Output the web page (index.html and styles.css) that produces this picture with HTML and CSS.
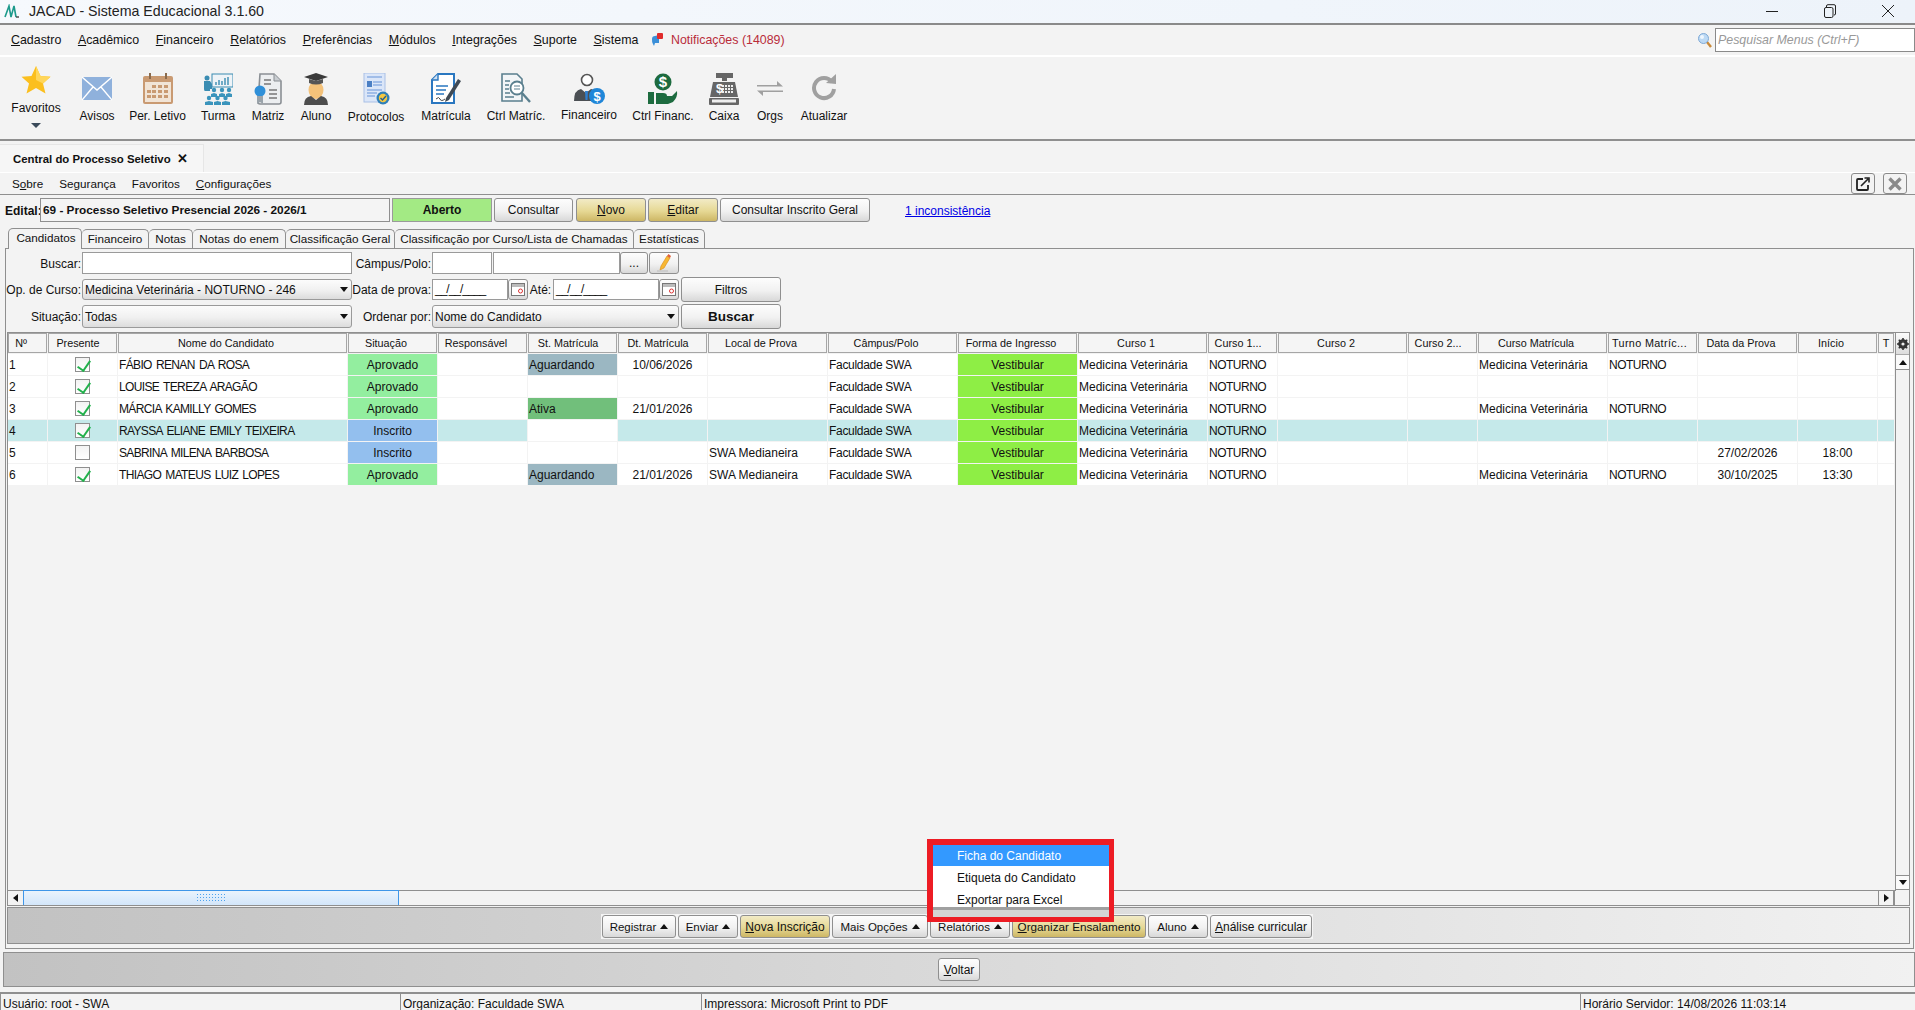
FILE: index.html
```html
<!DOCTYPE html>
<html lang="pt-BR">
<head>
	<meta charset="UTF-8">
	<title>JACAD - Sistema Educacional 3.1.60</title>
	<link rel="stylesheet" href="styles.css">
</head>
<body>
	<!-- barra de titulo -->
	<div class="titlebar">
		<svg class="logo" width="16" height="14" viewBox="0 0 16 14"><path d="M1 13 L5 2 L7 13 M7 13 L10 2 L12 13" fill="none" stroke="#1c9a8c" stroke-width="1.6"/><path d="M12 13 L15 13" stroke="#444" stroke-width="1.4"/></svg>
		<span class="app-name">JACAD - Sistema Educacional 3.1.60</span>
		<div class="win-ctrl">
			<svg width="14" height="14" viewBox="0 0 14 14"><path d="M1 7.5 H13" stroke="#222" stroke-width="1"/></svg>
			<svg width="14" height="14" viewBox="0 0 14 14"><rect x="1.5" y="3.5" width="8.5" height="10" rx="1.5" fill="none" stroke="#222"/><path d="M3.5 3 V2 Q3.5 .7 5 .7 H11 Q12.5 .7 12.5 2 V10 Q12.5 11 11 11" fill="none" stroke="#222"/></svg>
			<svg width="14" height="14" viewBox="0 0 14 14"><path d="M1 1 L13 13 M13 1 L1 13" stroke="#222" stroke-width="1"/></svg>
		</div>
	</div>

	<!-- menu principal -->
	<div class="menubar">
		<span><u>C</u>adastro</span>
		<span><u>A</u>cadêmico</span>
		<span><u>F</u>inanceiro</span>
		<span><u>R</u>elatórios</span>
		<span><u>P</u>referências</span>
		<span><u>M</u>ódulos</span>
		<span><u>I</u>ntegrações</span>
		<span><u>S</u>uporte</span>
		<span><u>S</u>istema</span>
		<span class="notif">
			<svg width="12" height="14" viewBox="0 0 12 14"><path d="M1 6 Q1 3 4 3 L8 2 V10 L4 10 L3 13 L1.5 10 Q1 9 1 6Z" fill="#3b8fd8"/><rect x="6" y="0" width="6" height="6" rx="1" fill="#e02b2b"/></svg>
			Notificações (14089)
		</span>
		<div class="menu-search">
			<svg width="15" height="16" viewBox="0 0 15 16"><path d="M10 10 L14 15" stroke="#c98a3a" stroke-width="2.4"/><circle cx="6.5" cy="6.5" r="5" fill="#bcd9f4" stroke="#7fa9d6"/><circle cx="5" cy="5" r="2" fill="#eef6fd"/></svg>
			<div class="search-box">Pesquisar Menus (Ctrl+F)</div>
		</div>
	</div>

	<!-- barra de icones -->
	<div class="toolbar">
		<div class="tool t-fav">
			<svg width="30" height="28" viewBox="0 0 30 28"><polygon points="15,0 19.5,10 29.5,10.8 22,17.5 24.5,27.5 15,22 5.5,27.5 8,17.5 .5,10.8 10.5,10" fill="#fbbf1e"/><polygon points="15,0 19.5,10 29.5,10.8 22,17.5 15,14" fill="#ffd65a"/></svg>
			<span>Favoritos</span>
			<i class="fav-caret"></i>
		</div>
		<div class="tool t-50">
			<svg width="30" height="32" viewBox="0 0 30 32"><rect y="4" width="30" height="23" fill="#8fb1dc"/><path d="M0 4 L15 17 L30 4 M0 27 L11 14 M30 27 L19 14" fill="none" stroke="#fff" stroke-width="1.4"/></svg>
			<span>Avisos</span>
		</div>
		<div class="tool t-71">
			<svg width="30" height="32" viewBox="0 0 30 32"><rect y="3" width="30" height="28" rx="2" fill="#c99a72"/><rect x="2" y="9" width="26" height="20" fill="#f1e4d6"/><g fill="#c99a72"><rect x="9" y="12" width="4" height="3"/><rect x="15" y="12" width="4" height="3"/><rect x="21" y="12" width="4" height="3"/><rect x="4" y="17" width="4" height="3"/><rect x="9" y="17" width="4" height="3"/><rect x="15" y="17" width="4" height="3"/><rect x="21" y="17" width="4" height="3"/><rect x="4" y="22" width="4" height="3"/><rect x="9" y="22" width="4" height="3"/><rect x="15" y="22" width="4" height="3"/><rect x="21" y="22" width="4" height="3"/></g><path d="M7 0 V6 M23 0 V6" stroke="#8a6a4c" stroke-width="2"/></svg>
			<span>Per. Letivo</span>
		</div>
		<div class="tool t-50">
			<svg width="30" height="32" viewBox="0 0 30 32"><rect x="9" y="1" width="21" height="13" fill="#eef3f7" stroke="#3a8cb2"/><path d="M13 12 V9 M16 12 V7 M19 12 V8 M22 12 V5 M25 12 V4" stroke="#3a8cb2" stroke-width="1.4"/><circle cx="4" cy="5" r="2.5" fill="#3a8cb2"/><path d="M1 8 H7 L9 11 V16 H7 V18 H2 Q1 18 1 16Z" fill="#3a8cb2"/><g fill="#3a94bc"><circle cx="11" cy="17" r="2.2"/><circle cx="19" cy="17" r="2.2"/><circle cx="26" cy="17" r="2.2"/><circle cx="6" cy="25" r="2.2"/><circle cx="14.5" cy="25" r="2.2"/><circle cx="22.5" cy="25" r="2.2"/><path d="M8 24 H14 V21 L11 20 L8 21Z M16 24 H22 V21 L19 20 L16 21Z M23 24 H29 V21 L26 20 L23 21Z"/><path d="M2 32 H10 V29 L6 28 L2 29Z M11 32 H18 V29 L14.5 28 L11 29Z M19 32 H27 V29 L22.5 28 L19 29Z"/></g></svg>
			<span>Turma</span>
		</div>
		<div class="tool t-50">
			<svg width="28" height="32" viewBox="0 0 28 32"><path d="M6 1 H20 L27 8 V29 Q27 31 25 31 H6 Q4 31 4 29 Z" fill="#eceef0" stroke="#8a8f94" stroke-width="1.6"/><path d="M20 1 V8 H27" fill="#c9cdd1" stroke="#8a8f94"/><path d="M10 7 H17 M10 11 H17 M15 17 H23 M15 21 H23 M15 25 H23" stroke="#777" stroke-width="1.5"/><circle cx="6" cy="18" r="5.5" fill="#2f8fd8"/><path d="M3 23 V31 L6 29 L9 31 V23" fill="#9aa3aa"/></svg>
			<span>Matriz</span>
		</div>
		<div class="tool t-46">
			<svg width="26" height="32" viewBox="0 0 26 32"><ellipse cx="13" cy="17" rx="7.5" ry="9" fill="#f4c27a"/><path d="M1 4 L13 0 L25 4 L13 8Z" fill="#3a3a3a"/><path d="M6 6 V10 Q13 13 20 10 V6 L13 8Z" fill="#555"/><path d="M1 32 Q1 24 8 23 L13 27 L18 23 Q25 24 25 32Z" fill="#4d4d4d"/></svg>
			<span>Aluno</span>
		</div>
		<div class="tool t-74">
			<svg width="27" height="32" viewBox="0 0 27 32"><rect x="1" y="0" width="21" height="29" fill="#dbe6f8" stroke="#a9c0e6"/><path d="M4 4 H19 M10 9 H19 M10 12 H19 M4 17 H19 M4 20 H14 M4 23 H12" stroke="#8fb0e2" stroke-width="1.3"/><rect x="4" y="8" width="5" height="6" fill="#4a7fc4"/><circle cx="20" cy="25" r="6.5" fill="#2f7fb8"/><circle cx="20" cy="25" r="4.2" fill="#f3c742"/><path d="M17.5 25 L19.5 27 L23 23" fill="none" stroke="#1f5f94" stroke-width="1.4"/></svg>
			<span class="lab-low">Protocolos</span>
		</div>
		<div class="tool t-66">
			<svg width="30" height="32" viewBox="0 0 30 32"><path d="M7 1 H23 V30 H1 V7Z" fill="#fff" stroke="#2a77c0" stroke-width="2"/><path d="M7 1 V7 H1" fill="#cfe0f2" stroke="#2a77c0" stroke-width="1.4"/><path d="M5 13 H17 M5 17 H15 M5 21 H13" stroke="#2a77c0" stroke-width="1.6"/><path d="M5 26 Q8 23 9 26 T14 26" fill="none" stroke="#444"/><path d="M15 25 L27 6 L30 8 L18 27 L14 29Z" fill="#3f4a55"/></svg>
			<span>Matrícula</span>
		</div>
		<div class="tool t-74">
			<svg width="30" height="32" viewBox="0 0 30 32"><path d="M1 1 H16 L21 6 V28 H1Z" fill="#f2f5f7" stroke="#5a7f8e" stroke-width="1.6"/><path d="M4 8 H9 M4 12 H8 M4 16 H8 M4 20 H9 M4 24 H13" stroke="#5a7f8e" stroke-width="1.4"/><circle cx="16" cy="15" r="6.5" fill="#fff" stroke="#5a7f8e" stroke-width="1.8"/><path d="M13 13 H19 M13 16 H19" stroke="#5a7f8e"/><path d="M21 20 L29 29" stroke="#5a7f8e" stroke-width="2.4"/></svg>
			<span>Ctrl Matríc.</span>
		</div>
		<div class="tool t-72">
			<svg width="31" height="32" viewBox="0 0 31 32"><circle cx="13" cy="7" r="5.5" fill="#fff" stroke="#555" stroke-width="1.6"/><path d="M0 28 Q0 17 7 16 L12 20 L17 16 Q19 16 20 18 L20 28Z" fill="#4b4f54"/><path d="M11 18 H14 L13.5 27 H11.5Z" fill="#2f7fd0"/><circle cx="23" cy="23" r="8" fill="#1f86d8"/><text x="23" y="27.5" class="ico-txt" text-anchor="middle">$</text></svg>
			<span class="lab-high">Financeiro</span>
		</div>
		<div class="tool t-76">
			<svg width="30" height="32" viewBox="0 0 30 32"><circle cx="15" cy="9" r="8.5" fill="#1d6b3f"/><text x="15" y="14" class="ico-txt ico-big" text-anchor="middle">$</text><path d="M0 19 H6 V31 H0Z M8 20 H15 Q19 20 19 23 H24 L29 18 Q30 24 25 29 L20 31 H8Z" fill="#1d6b3f"/></svg>
			<span>Ctrl Financ.</span>
		</div>
		<div class="tool t-46">
			<svg width="30" height="32" viewBox="0 0 30 32"><rect x="7" y="0" width="17" height="5" fill="#666"/><rect x="13" y="5" width="5" height="3" fill="#666"/><path d="M4 9 H26 L29 24 H1Z" fill="#666"/><rect x="0" y="25" width="30" height="7" rx="1" fill="#666"/><rect x="3" y="26.5" width="24" height="3" fill="#eee"/><text x="7" y="20" class="ico-txt" fill="#fff">$</text><g fill="#eee"><rect x="13" y="12" width="2" height="2"/><rect x="16" y="12" width="2" height="2"/><rect x="19" y="12" width="2" height="2"/><rect x="22" y="12" width="2" height="2"/><rect x="13" y="15" width="2" height="2"/><rect x="16" y="15" width="2" height="2"/><rect x="19" y="15" width="2" height="2"/><rect x="22" y="15" width="2" height="2"/><rect x="13" y="18" width="2" height="2"/><rect x="16" y="18" width="2" height="2"/><rect x="19" y="18" width="2" height="2"/><rect x="22" y="18" width="2" height="2"/></g></svg>
			<span>Caixa</span>
		</div>
		<div class="tool t-46">
			<svg width="26" height="32" viewBox="0 0 26 32"><path d="M0 12 H20 V8 L26 13.5 H0Z M26 19 H6 V23 L0 17.5 H26Z" fill="#a0a0a0"/></svg>
			<span>Orgs</span>
		</div>
		<div class="tool t-62">
			<svg width="26" height="32" viewBox="0 0 26 32"><path d="M21 9 A10 10 0 1 0 23 16" fill="none" stroke="#a0a0a0" stroke-width="4"/><path d="M15 10 L25 11 L25 1Z" fill="#a0a0a0"/></svg>
			<span>Atualizar</span>
		</div>
	</div>

	<!-- aba da tela aberta -->
	<div class="screen-tabs">
		<div class="screen-tab"><b>Central do Processo Seletivo</b><span class="tab-x">✕</span></div>
	</div>

	<div class="submenu">
		<span>S<u>o</u>bre</span>
		<span>Segurança</span>
		<span>Favoritos</span>
		<span><u>C</u>onfigurações</span>
		<div class="sub-btns">
			<span class="sq-btn"><svg width="14" height="14" viewBox="0 0 14 14"><path d="M7 2 H2 Q1 2 1 3 V12 Q1 13 2 13 H11 Q12 13 12 12 V8" fill="none" stroke="#222" stroke-width="1.8"/><path d="M5 9 L12 2 M8.5 1 H13 V5.5" fill="none" stroke="#222" stroke-width="1.6"/></svg></span>
			<span class="sq-btn"><svg width="14" height="14" viewBox="0 0 14 14"><path d="M1.5 1.5 L12.5 12.5 M12.5 1.5 L1.5 12.5" stroke="#8a8a8a" stroke-width="3.4"/></svg></span>
		</div>
	</div>

	<div class="edital-row">
		<b class="edital-label">Edital:</b>
		<div class="edital-input">69 - Processo Seletivo Presencial 2026 - 2026/1</div>
		<div class="status-aberto">Aberto</div>
		<div class="btn b-consultar">Consultar</div>
		<div class="btn yellow b-novo"><span><u>N</u>ovo</span></div>
		<div class="btn yellow b-editar"><span><u>E</u>ditar</span></div>
		<div class="btn b-geral">Consultar Inscrito Geral</div>
		<a class="incons">1 inconsistência</a>
	</div>

	<div class="tabs">
		<div class="tab active">Candidatos</div>
		<div class="tab">Financeiro</div>
		<div class="tab">Notas</div>
		<div class="tab">Notas do enem</div>
		<div class="tab">Classificação Geral</div>
		<div class="tab">Classificação por Curso/Lista de Chamadas</div>
		<div class="tab">Estatísticas</div>
	</div>

	<div class="panel">
		<div class="form-row row-1">
			<label class="lab-a">Buscar:</label>
			<div class="field f-busca"></div>
			<label class="lab-b">Câmpus/Polo:</label>
			<div class="field f-cod"></div>
			<div class="field f-polo"></div>
			<div class="btn b-dots">...</div>
			<div class="btn b-pen"><svg width="16" height="18" viewBox="0 0 16 18"><path d="M5 12 L11 2 L14 4 L8 14 L4 16Z" fill="#f7b733" stroke="#d98a12" stroke-width=".6"/><path d="M11 2 L12.5 0 L15 2 L14 4Z" fill="#e0603a"/><path d="M1 17 H12" stroke="#bbb"/></svg></div>
		</div>
		<div class="form-row row-2">
			<label class="lab-a">Op. de Curso:</label>
			<div class="combo f-busca">Medicina Veterinária - NOTURNO - 246</div>
			<label class="lab-b">Data de prova:</label>
			<div class="field f-data">__/__/____</div>
			<div class="btn b-cal"><svg width="14" height="13" viewBox="0 0 14 13"><rect x=".5" y=".5" width="13" height="12" fill="#fff" stroke="#777"/><rect x="1" y="1" width="12" height="3" fill="#bbb"/><circle cx="9.5" cy="8" r="2" fill="none" stroke="#d33"/></svg></div>
			<label class="lab-ate">Até:</label>
			<div class="field f-data2">__/__/____</div>
			<div class="btn b-cal"><svg width="14" height="13" viewBox="0 0 14 13"><rect x=".5" y=".5" width="13" height="12" fill="#fff" stroke="#777"/><rect x="1" y="1" width="12" height="3" fill="#bbb"/><circle cx="9.5" cy="8" r="2" fill="none" stroke="#d33"/></svg></div>
			<div class="btn b-side">Filtros</div>
		</div>
		<div class="form-row row-3">
			<label class="lab-a">Situação:</label>
			<div class="combo f-busca f-tall">Todas</div>
			<label class="lab-b">Ordenar por:</label>
			<div class="combo f-ordem f-tall">Nome do Candidato</div>
			<div class="btn b-side b-buscar">Buscar</div>
		</div>

		<div class="grid-wrap">
			<div class="grid-main">
				<div class="grid-view">
					<table class="grid">
						<colgroup>
							<col class="c40"><col class="c70"><col class="c230"><col class="c90"><col class="c90"><col class="c90"><col class="c90"><col class="c120"><col class="c130"><col class="c120"><col class="c130"><col class="c70"><col class="c130"><col class="c70"><col class="c130"><col class="c90"><col class="c100"><col class="c80"><col class="c17">
						</colgroup>
						<thead>
							<tr>
								<th><span>Nº</span></th><th><span>Presente</span></th><th><span>Nome do Candidato</span></th><th><span>Situação</span></th><th><span>Responsável</span></th><th><span>St. Matrícula</span></th><th><span>Dt. Matrícula</span></th><th><span>Local de Prova</span></th><th><span>Câmpus/Polo</span></th><th><span>Forma de Ingresso</span></th><th><span>Curso 1</span></th><th><span>Curso 1...</span></th><th><span>Curso 2</span></th><th><span>Curso 2...</span></th><th><span>Curso Matrícula</span></th><th><span>Turno Matríc...</span></th><th><span>Data da Prova</span></th><th><span>Início</span></th><th><span>T</span></th>
							</tr>
						</thead>
						<tbody>
							<tr>
								<td>1</td><td class="ck"><i class="chk on"></i></td><td>FÁBIO RENAN DA ROSA</td><td class="ctr aprovado">Aprovado</td><td></td><td class="aguardando">Aguardando</td><td class="ctr">10/06/2026</td><td></td><td>Faculdade SWA</td><td class="ctr vest">Vestibular</td><td>Medicina Veterinária</td><td>NOTURNO</td><td></td><td></td><td>Medicina Veterinária</td><td>NOTURNO</td><td></td><td></td><td></td>
							</tr>
							<tr>
								<td>2</td><td class="ck"><i class="chk on"></i></td><td>LOUISE TEREZA ARAGÃO</td><td class="ctr aprovado">Aprovado</td><td></td><td></td><td></td><td></td><td>Faculdade SWA</td><td class="ctr vest">Vestibular</td><td>Medicina Veterinária</td><td>NOTURNO</td><td></td><td></td><td></td><td></td><td></td><td></td><td></td>
							</tr>
							<tr>
								<td>3</td><td class="ck"><i class="chk on"></i></td><td>MÁRCIA KAMILLY GOMES</td><td class="ctr aprovado">Aprovado</td><td></td><td class="ativa">Ativa</td><td class="ctr">21/01/2026</td><td></td><td>Faculdade SWA</td><td class="ctr vest">Vestibular</td><td>Medicina Veterinária</td><td>NOTURNO</td><td></td><td></td><td>Medicina Veterinária</td><td>NOTURNO</td><td></td><td></td><td></td>
							</tr>
							<tr class="sel">
								<td>4</td><td class="ck"><i class="chk on"></i></td><td>RAYSSA ELIANE EMILY TEIXEIRA</td><td class="ctr inscrito">Inscrito</td><td></td><td class="blank"></td><td></td><td></td><td>Faculdade SWA</td><td class="ctr vest">Vestibular</td><td>Medicina Veterinária</td><td>NOTURNO</td><td></td><td></td><td></td><td></td><td></td><td></td><td></td>
							</tr>
							<tr>
								<td>5</td><td class="ck"><i class="chk"></i></td><td>SABRINA MILENA BARBOSA</td><td class="ctr inscrito">Inscrito</td><td></td><td></td><td></td><td>SWA Medianeira</td><td>Faculdade SWA</td><td class="ctr vest">Vestibular</td><td>Medicina Veterinária</td><td>NOTURNO</td><td></td><td></td><td></td><td></td><td class="ctr">27/02/2026</td><td class="ctr">18:00</td><td></td>
							</tr>
							<tr>
								<td>6</td><td class="ck"><i class="chk on"></i></td><td>THIAGO MATEUS LUIZ LOPES</td><td class="ctr aprovado">Aprovado</td><td></td><td class="aguardando">Aguardando</td><td class="ctr">21/01/2026</td><td>SWA Medianeira</td><td>Faculdade SWA</td><td class="ctr vest">Vestibular</td><td>Medicina Veterinária</td><td>NOTURNO</td><td></td><td></td><td>Medicina Veterinária</td><td>NOTURNO</td><td class="ctr">30/10/2025</td><td class="ctr">13:30</td><td></td>
							</tr>
						</tbody>
					</table>
				</div>
				<div class="vscroll">
					<div class="gear"><svg width="12" height="12" viewBox="0 0 12 12"><circle cx="6" cy="6" r="3.6" fill="none" stroke="#333" stroke-width="2.4"/><path d="M6 0 V12 M0 6 H12 M1.8 1.8 L10.2 10.2 M10.2 1.8 L1.8 10.2" stroke="#333" stroke-width="1.6"/><circle cx="6" cy="6" r="1.6" fill="#eee"/></svg></div>
					<div class="v-btn"><i class="arr up"></i></div>
					<div class="v-track"></div>
					<div class="v-btn"><i class="arr down"></i></div>
				</div>
			</div>
			<div class="hscroll">
				<div class="h-btn"><i class="arr left"></i></div>
				<div class="h-thumb"><i class="grip"></i></div>
				<div class="h-track"></div>
				<div class="h-btn"><i class="arr right"></i></div>
				<div class="h-corner"></div>
			</div>
		</div>

		<div class="action-bar">
			<div class="action-btns">
				<div class="btn">Registrar<i class="arr up"></i></div>
				<div class="btn">Enviar<i class="arr up"></i></div>
				<div class="btn yellow"><span><u>N</u>ova Inscrição</span></div>
				<div class="btn">Mais Opções<i class="arr up"></i></div>
				<div class="btn">Relatórios<i class="arr up"></i></div>
				<div class="btn yellow"><span><u>O</u>rganizar Ensalamento</span></div>
				<div class="btn">Aluno<i class="arr up"></i></div>
				<div class="btn"><span><u>A</u>nálise curricular</span></div>
			</div>
		</div>
	</div>

	<div class="back-bar"><div class="btn"><span><u>V</u>oltar</span></div></div>

	<div class="statusbar">
		<div class="st-1">Usuário: root - SWA</div>
		<div class="st-2">Organização: Faculdade SWA</div>
		<div class="st-3">Impressora: Microsoft Print to PDF</div>
		<div class="st-4">Horário Servidor: 14/08/2026 11:03:14</div>
	</div>

	<!-- menu do botao Relatorios, com a marcacao vermelha -->
	<div class="popup">
		<div class="popup-item hover">Ficha do Candidato</div>
		<div class="popup-item">Etiqueta do Candidato</div>
		<div class="popup-item">Exportar para Excel</div>
	</div>
</body>
</html>
```

FILE: styles.css
```css
*{
	box-sizing: border-box;
}
html, body{
	margin: 0;
	height: 100%;
}
body{
	position: relative;
	display: flex;
	flex-direction: column;
	height: 1010px;
	overflow: hidden;
	background: #f3f3f3;
	color: #111;
	font: 12px "Liberation Sans", Arial, sans-serif;
}
u{
	text-decoration: underline;
}

/* titulo */
.titlebar{
	display: flex;
	align-items: center;
	height: 25px;
	padding-left: 4px;
	padding-bottom: 2px;
	background: linear-gradient(to right, #f6f9fd, #edf3fa);
	border-bottom: 2px solid #8a8a8a;
}
.logo{
	margin-right: 9px;
}
.app-name{
	font-size: 14.2px;
	color: #222;
}
.win-ctrl{
	display: flex;
	gap: 44px;
	margin-left: auto;
	margin-right: 20px;
}

/* menu */
.menubar{
	display: flex;
	align-items: center;
	gap: 16.6px;
	height: 32px;
	padding-left: 11px;
	font-size: 12.4px;
	border-bottom: 2px solid #fff;
}
.notif{
	display: flex;
	align-items: center;
	gap: 8px;
	margin-left: -4px;
	color: #b92c3a;
}
.menu-search{
	display: flex;
	align-items: center;
	gap: 3px;
	margin-left: auto;
}
.search-box{
	width: 200px;
	height: 24px;
	padding: 4px 2px;
	background: #fff;
	border: 1px solid #8a8a8a;
	color: #999;
	font-style: italic;
}

/* icones */
.toolbar{
	display: flex;
	height: 84px;
	padding-top: 16px;
	border-bottom: 2px solid #8f8f8f;
}
.tool{
	display: flex;
	flex-direction: column;
	align-items: center;
	flex: none;
}
.tool svg{
	flex: none;
}
.tool span{
	margin-top: 3px;
	line-height: 16px;
	white-space: nowrap;
}
.tool .lab-low{
	margin-top: 4px;
}
.tool .lab-high{
	margin-top: 2px;
}
.t-fav{
	width: 72px;
	margin-top: -7px;
}
.t-fav span{
	margin-top: 6px;
}
.fav-caret{
	margin-top: 7px;
	border: 5px solid transparent;
	border-top: 5px solid #3a4a5a;
	border-bottom: 0;
}
.t-46{ width: 46px; }
.t-50{ width: 50px; }
.t-62{ width: 62px; }
.t-66{ width: 66px; }
.t-71{ width: 71px; }
.t-72{ width: 72px; }
.t-74{ width: 74px; }
.t-76{ width: 76px; }
.ico-txt{
	font: bold 13px "Liberation Sans", Arial, sans-serif;
	fill: #fff;
}
.ico-big{
	font-size: 15px;
}

/* aba da tela */
.screen-tabs{
	height: 32px;
	padding-top: 3px;
	border-bottom: 1px solid #fff;
}
.screen-tab{
	display: flex;
	align-items: center;
	width: 204px;
	height: 28px;
	padding-left: 13px;
	font-size: 11.4px;
	background: #f6f6f6;
	border: 1px solid #e6e6e6;
	border-bottom: 0;
	border-left: 0;
}
.tab-x{
	margin-left: 6px;
	font-size: 13px;
	font-weight: bold;
}

.submenu{
	display: flex;
	align-items: center;
	gap: 16px;
	height: 22px;
	padding-left: 12px;
	font-size: 11.7px;
	border-bottom: 1px solid #8f8f8f;
}
.sub-btns{
	display: flex;
	gap: 8px;
	margin-left: auto;
	margin-right: 8px;
}
.sq-btn{
	display: flex;
	align-items: center;
	justify-content: center;
	width: 24px;
	height: 21px;
	background: #f3f3f3;
	border: 1px solid #8a8a8a;
	border-radius: 3px;
}

/* botoes */
.btn{
	display: flex;
	align-items: center;
	justify-content: center;
	flex: none;
	height: 24px;
	padding: 0 6px;
	background: linear-gradient(#fdfdfd, #f1f1f1 55%, #d8d8d8);
	border: 1px solid #8f8f8f;
	border-radius: 3px;
	white-space: nowrap;
}
.btn.yellow{
	background: linear-gradient(#f2ebc6, #e6d894 55%, #cdb765);
}

/* edital */
.edital-row{
	display: flex;
	align-items: center;
	gap: 2px;
	height: 24px;
	margin-top: 3px;
	padding-left: 5px;
}
.edital-label{
	width: 33px;
	margin-top: 2px;
}
.edital-input{
	width: 350px;
	height: 24px;
	padding: 4px 2px;
	font-size: 11.8px;
	background: #f4f4f4;
	border: 1px solid #8f8f8f;
	font-weight: bold;
}
.status-aberto{
	width: 100px;
	height: 24px;
	line-height: 22px;
	text-align: center;
	font-weight: bold;
	background: #a3ea84;
	border: 1px solid #9a9a9a;
}
.b-consultar{ width: 79px; }
.b-novo{ width: 70px; margin-left: 1px; }
.b-editar{ width: 70px; }
.b-geral{ width: 150px; }
.incons{
	margin-left: 33px;
	margin-top: 2px;
	color: #0000e6;
	text-decoration: underline;
}

/* abas */
.tabs{
	display: flex;
	align-items: flex-end;
	height: 21px;
	margin-top: 5px;
	padding-left: 8px;
	font-size: 11.7px;
}
.tab{
	height: 19px;
	padding-top: 2px;
	text-align: center;
	background: #f3f3f3;
	border: 1px solid #8f8f8f;
	border-left: 0;
	border-bottom: 0;
	border-top-left-radius: 5px;
	border-top-right-radius: 5px;
	white-space: nowrap;
}
.tab:nth-child(1){ width: 74px; }
.tab:nth-child(2){ width: 67px; }
.tab:nth-child(3){ width: 44px; }
.tab:nth-child(4){ width: 93px; }
.tab:nth-child(5){ width: 109px; }
.tab:nth-child(6){ width: 239px; }
.tab:nth-child(7){ width: 71px; }
.tab.active{
	position: relative;
	z-index: 1;
	height: 21px;
	margin-bottom: -1px;
	padding-left: 2px;
	border-left: 1px solid #8f8f8f;
}

.panel{
	flex: 1;
	display: flex;
	flex-direction: column;
	min-height: 0;
	margin: 0 1px 0 5px;
	padding-bottom: 4px;
	border: 1px solid #8f8f8f;
}
.form-row{
	display: flex;
	align-items: center;
	height: 25px;
}
.row-1{
	height: 22px;
	margin-top: 3px;
}
.row-1 label{
	padding-top: 1px;
}
.row-2{
	margin-top: 3px;
}
.row-3{
	margin-top: 2px;
}
.form-row label{
	white-space: nowrap;
}
.lab-a{
	width: 75px;
	margin-right: 1px;
	text-align: right;
}
.lab-b{
	width: 79px;
	margin-right: 1px;
	text-align: right;
}
.lab-ate{
	width: 25px;
	text-align: center;
}
.field{
	height: 100%;
	padding: 2px;
	background: #fff;
	border: 1px solid #9a9a9a;
	flex: none;
}
.row-2 .field{
	height: 21px;
	letter-spacing: -1px;
}
.f-busca{
	width: 270px;
}
.f-cod{ width: 60px; }
.f-polo{ width: 127px; margin-left: 1px; }
.f-data{ width: 76px; }
.f-data2{ width: 106px; }
.b-dots{ width: 28px; height: 22px; }
.b-pen{ width: 30px; height: 22px; margin-left: 1px; padding: 0; }
.b-cal{ width: 20px; height: 21px; padding: 0; }
.b-side{ width: 100px; height: 25px; margin-left: 2px; }
.b-buscar{
	font-size: 13.5px;
	font-weight: bold;
}
.combo{
	display: flex;
	align-items: center;
	position: relative;
	height: 21px;
	padding-left: 2px;
	background: linear-gradient(#fcfcfc, #f0f0f0 55%, #dcdcdc);
	border: 1px solid #9a9a9a;
	border-radius: 3px;
	flex: none;
}
.combo::after{
	content: "";
	position: absolute;
	right: 3px;
	top: 50%;
	margin-top: -3px;
	border: 4px solid transparent;
	border-top: 5px solid #111;
	border-bottom: 0;
}
.f-tall{ height: 23px; }
.f-ordem{ width: 247px; }

/* grade */
.grid-wrap{
	flex: 1;
	display: flex;
	flex-direction: column;
	min-height: 0;
	margin: 3px 3px 0 1px;
	border: 1px solid #8f8f8f;
}
.grid-main{
	flex: 1;
	display: flex;
	min-height: 0;
}
.grid-view{
	flex: 1;
	min-width: 0;
	overflow: hidden;
	border-bottom: 1px solid #8f8f8f;
}
.grid{
	table-layout: fixed;
	border-collapse: separate;
	border-spacing: 0;
	width: 1887px;
}
.c17{ width: 17px; }
.c40{ width: 40px; }
.c70{ width: 70px; }
.c80{ width: 80px; }
.c90{ width: 90px; }
.c100{ width: 100px; }
.c120{ width: 120px; }
.c130{ width: 130px; }
.c230{ width: 230px; }
.grid th{
	height: 21px;
	padding: 0 1px 1px 0;
	font-weight: normal;
	font-size: 10.8px;
}
.grid th span{
	display: block;
	height: 20px;
	padding-right: 13px;
	line-height: 18px;
	background: #f5f5f5;
	border: 1px solid #a6a6a6;
	overflow: hidden;
	white-space: nowrap;
}
.grid th:nth-child(16) span{
	padding: 0 0 0 3px;
	text-align: left;
	letter-spacing: .35px;
}
.grid th:nth-child(2) span,
.grid th:nth-child(12) span,
.grid th:nth-child(14) span,
.grid th:nth-child(6) span,
.grid th:nth-child(7) span{
	padding-right: 9px;
}
.grid th:last-child span{
	padding: 0;
}
.grid td{
	height: 22px;
	padding: 0 1px;
	background: #fff;
	border-right: 1px solid #f3f3f3;
	border-bottom: 1px solid #f3f3f3;
	overflow: hidden;
	white-space: nowrap;
}
.grid td:nth-child(3){
	letter-spacing: -.65px;
	word-spacing: 1.5px;
}
.grid td:nth-child(9){
	letter-spacing: -.3px;
}
.grid td:nth-child(12), .grid td:nth-child(16){
	letter-spacing: -.5px;
}
.grid td.ctr, .grid td.ck{
	text-align: center;
}
.grid .sel td{
	background: #c5e9ea;
}
.grid td.aprovado, .grid .sel td.aprovado{
	background: #93ee9f;
}
.grid td.inscrito, .grid .sel td.inscrito{
	background: #93bfee;
}
.grid td.aguardando{
	background: #9bb7c2;
}
.grid td.ativa{
	background: #71bf7b;
}
.grid td.vest, .grid .sel td.vest{
	background: #8eee45;
}
.grid .sel td.blank{
	background: #fff;
}
.chk{
	position: relative;
	display: inline-block;
	width: 15px;
	height: 15px;
	vertical-align: middle;
	background: linear-gradient(#f3f3f3, #fff);
	border: 1px solid #8f8f8f;
}
.chk.on::after{
	content: "";
	position: absolute;
	left: 4px;
	top: 0;
	width: 6px;
	height: 11px;
	border-right: 2px solid #22b14c;
	border-bottom: 2px solid #22b14c;
	transform: rotate(35deg);
}

/* barras de rolagem */
.vscroll{
	display: flex;
	flex-direction: column;
	flex: none;
	width: 14px;
	border-left: 1px solid #8f8f8f;
}
.gear{
	display: flex;
	align-items: center;
	justify-content: center;
	flex: none;
	height: 22px;
	background: linear-gradient(#fbfbfb, #dcdcdc);
	border-bottom: 1px solid #aaa;
}
.v-btn{
	display: flex;
	align-items: center;
	justify-content: center;
	flex: none;
	height: 15px;
	background: #fafafa;
	border-bottom: 1px solid #8f8f8f;
}
.v-btn:last-child{
	border-top: 1px solid #8f8f8f;
	border-bottom: 1px solid #8f8f8f;
	margin-bottom: 1px;
}
.v-track{
	flex: 1;
}
.arr{
	display: inline-block;
	width: 0;
	height: 0;
	border: 4px solid transparent;
}
.arr.up{
	border-top: 0;
	border-bottom: 5px solid #111;
}
.arr.down{
	border-bottom: 0;
	border-top: 5px solid #111;
}
.arr.left{
	border-left: 0;
	border-right: 5px solid #111;
}
.arr.right{
	border-right: 0;
	border-left: 5px solid #111;
}
.hscroll{
	display: flex;
	flex: none;
	height: 14px;
}
.h-btn{
	display: flex;
	align-items: center;
	justify-content: center;
	flex: none;
	width: 16px;
	border-right: 1px solid #8f8f8f;
}
.h-track + .h-btn{
	border-left: 1px solid #8f8f8f;
}
.h-thumb{
	display: flex;
	align-items: center;
	justify-content: center;
	flex: none;
	width: 376px;
	background: linear-gradient(#eaf3fc, #d3e6fa);
	border: 1px solid #3f96e8;
	border-bottom: 0;
	margin-top: -1px;
	margin-left: -1px;
}
.grip{
	width: 30px;
	height: 10px;
	background: radial-gradient(circle, #4ea3ee 0.8px, transparent 1px) 0 0 / 3px 3px;
}
.h-track{
	flex: 1;
}
.h-corner{
	flex: none;
	width: 15px;
	border-left: 1px solid #8f8f8f;
}

/* acoes */
.action-bar{
	display: flex;
	align-items: center;
	justify-content: center;
	flex: none;
	height: 37px;
	padding: 2px 3px 0 0;
	margin: 1px 3px 0 1px;
	background: linear-gradient(to right, #c2c2c2, #f1f1f1);
	border: 1px solid #8f8f8f;
}
.action-btns{
	display: flex;
	gap: 2px;
	padding: 1px;
	background: #f4f4f4;
}
.action-btns .btn{
	height: 23px;
	gap: 4px;
}
.action-btns .btn:nth-child(1){ width: 74px; font-size: 11.5px; }
.action-btns .btn:nth-child(2){ width: 60px; font-size: 11.5px; }
.action-btns .btn:nth-child(3){ width: 90px; }
.action-btns .btn:nth-child(4){ width: 96px; font-size: 11.5px; }
.action-btns .btn:nth-child(5){ width: 80px; font-size: 11.5px; }
.action-btns .btn:nth-child(6){ width: 134px; font-size: 11.7px; }
.action-btns .btn:nth-child(7){ width: 60px; font-size: 11.5px; }
.action-btns .btn:nth-child(8){ width: 102px; }

.back-bar{
	display: flex;
	align-items: center;
	justify-content: center;
	flex: none;
	height: 35px;
	margin: 3px 0 0 3px;
	background: linear-gradient(to right, #c2c2c2, #f1f1f1);
	border: 1px solid #8f8f8f;
}
.back-bar .btn{
	width: 42px;
	height: 23px;
	padding: 0;
}

/* status */
.statusbar{
	display: flex;
	flex: none;
	height: 18px;
	margin-top: 5px;
	border-top: 2px solid #8f8f8f;
}
.statusbar div{
	padding: 3px 2px 0;
	border-left: 1px solid #8f8f8f;
}
.st-1{ width: 400px; }
.st-2{ width: 301px; }
.st-3{ width: 879px; }
.st-4{ flex: 1; }

/* popup */
.popup{
	position: absolute;
	left: 927px;
	top: 839px;
	z-index: 5;
	width: 187px;
	height: 83px;
	padding-bottom: 7px;
	background: linear-gradient(#fff 62px, #a0a0a0 62px, #a0a0a0 65px, #d4d4d4 65px);
	border: 5px solid #ed1c24;
	border-left-width: 6px;
	border-top-width: 6px;
}
.popup-item{
	height: 22px;
	padding-left: 24px;
	line-height: 24px;
}
.popup-item.hover{
	height: 21px;
	line-height: 23px;
	background: #3399ff;
	color: #fff;
}
```
